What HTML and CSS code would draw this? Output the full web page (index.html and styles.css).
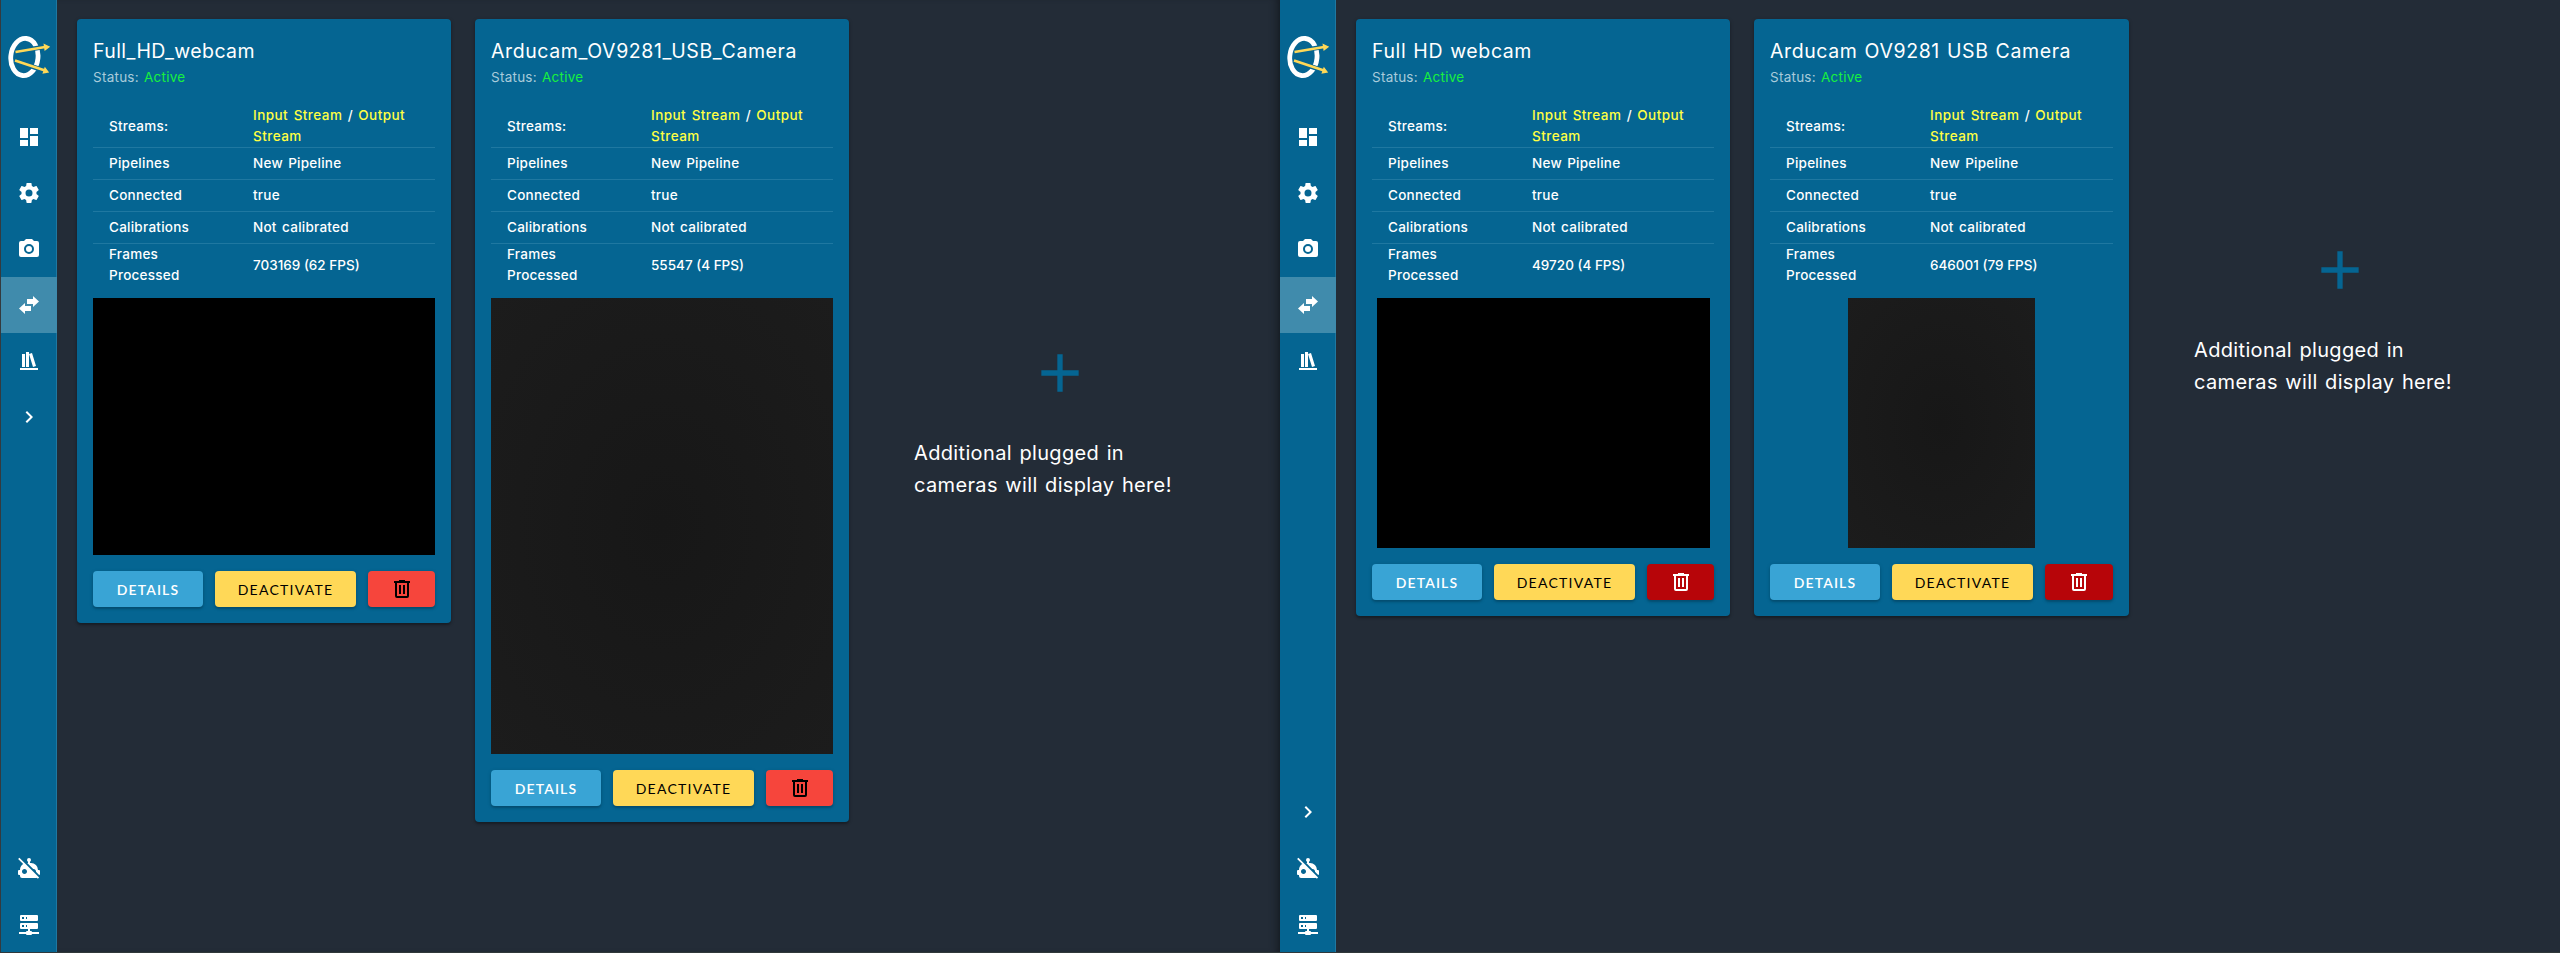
FILE: index.html
```html
<!DOCTYPE html>
<html lang="en">
<head>
	<meta charset="utf-8">
	<title>Camera Matching</title>
	<link rel="stylesheet" href="styles.css">
</head>
<body>
	<svg class="defs" xmlns="http://www.w3.org/2000/svg">
		<symbol id="logo" viewBox="0 0 44 42">
			<ellipse cx="16.4" cy="21" rx="13.6" ry="18.6" transform="rotate(6 16.4 21)" fill="none" stroke="#fff" stroke-width="4.8"/>
			<path d="M14 14.8L38 10.5M14 27L37 35" stroke="#056592" stroke-width="4.6"/>
			<path d="M7.5 16L37 11M7 24.5L37 34.5" stroke="#ffd857" stroke-width="2.6"/>
			<path d="M35.5 7.5L42.2 10.7L36.6 15ZM36.8 30.8L41.2 36.5L34.4 37.8Z" fill="#ffd857"/>
		</symbol>
		<symbol id="dashboard" viewBox="0 0 24 24"><path d="M13,3V9H21V3M13,21H21V11H13M3,21H11V15H3M3,13H11V3H3V13Z"/></symbol>
		<symbol id="cog" viewBox="0 0 24 24"><path d="M12,15.5A3.5,3.5 0 0,1 8.5,12A3.5,3.5 0 0,1 12,8.5A3.5,3.5 0 0,1 15.5,12A3.5,3.5 0 0,1 12,15.5M19.43,12.97C19.47,12.65 19.5,12.33 19.5,12C19.5,11.67 19.47,11.34 19.43,11L21.54,9.37C21.73,9.22 21.78,8.95 21.66,8.73L19.66,5.27C19.54,5.05 19.27,4.96 19.05,5.05L16.56,6.05C16.04,5.66 15.5,5.32 14.87,5.07L14.5,2.42C14.46,2.18 14.25,2 14,2H10C9.75,2 9.54,2.18 9.5,2.42L9.13,5.07C8.5,5.32 7.96,5.66 7.44,6.05L4.95,5.05C4.73,4.96 4.46,5.05 4.34,5.27L2.34,8.73C2.21,8.95 2.27,9.22 2.46,9.37L4.57,11C4.53,11.34 4.5,11.67 4.5,12C4.5,12.33 4.53,12.65 4.57,12.97L2.46,14.63C2.27,14.78 2.21,15.05 2.34,15.27L4.34,18.73C4.46,18.95 4.73,19.03 4.95,18.95L7.44,17.94C7.96,18.34 8.5,18.68 9.13,18.93L9.5,21.58C9.54,21.82 9.75,22 10,22H14C14.25,22 14.46,21.82 14.5,21.58L14.87,18.93C15.5,18.67 16.04,18.34 16.56,17.94L19.05,18.95C19.27,19.03 19.54,18.95 19.66,18.73L21.66,15.27C21.78,15.05 21.73,14.78 21.54,14.63L19.43,12.97Z"/></symbol>
		<symbol id="camera" viewBox="0 0 24 24"><path d="M4,4H7L9,2H15L17,4H20A2,2 0 0,1 22,6V18A2,2 0 0,1 20,20H4A2,2 0 0,1 2,18V6A2,2 0 0,1 4,4M12,7A5,5 0 0,0 7,12A5,5 0 0,0 12,17A5,5 0 0,0 17,12A5,5 0 0,0 12,7M12,9A3,3 0 0,1 15,12A3,3 0 0,1 12,15A3,3 0 0,1 9,12A3,3 0 0,1 12,9Z"/></symbol>
		<symbol id="swap" viewBox="0 0 24 24"><path d="M8,10V13H14V18H8V21L2,15.5L8,10M22,8.5L16,3V6H10V11H16V14L22,8.5Z"/></symbol>
		<symbol id="books" viewBox="0 0 24 24"><path d="M9 3V18H12V3H9M12 5L16 18L19 17L15 4L12 5M5 5V18H8V5H5M3 19V21H21V19H3Z"/></symbol>
		<symbol id="chevron" viewBox="0 0 24 24"><path d="M8.59,16.58L13.17,12L8.59,7.41L10,6L16,12L10,18L8.59,16.58Z"/></symbol>
		<symbol id="robot-off" viewBox="0 0 24 24"><path d="M23,15V18C23,18.5 22.64,18.88 22.17,18.97L18.97,15.77C19,15.68 19,15.59 19,15.5C19,14.12 17.88,13 16.5,13C16.41,13 16.32,13 16.23,13.03L10.2,7H11V5.73C10.4,5.39 10,4.74 10,4A2,2 0 0,1 12,2A2,2 0 0,1 14,4C14,4.74 13.6,5.39 13,5.73V7H14A7,7 0 0,1 21,14H22A1,1 0 0,1 23,15M22.11,21.46L20.84,22.73L19.89,21.78C19.62,21.92 19.32,22 19,22H5A2,2 0 0,1 3,20V19H2A1,1 0 0,1 1,18V15A1,1 0 0,1 2,14H3C3,11.53 4.29,9.36 6.22,8.11L1.11,3L2.39,1.73L22.11,21.46M10,15.5C10,14.12 8.88,13 7.5,13C6.12,13 5,14.12 5,15.5C5,16.88 6.12,18 7.5,18C8.88,18 10,16.88 10,15.5Z"/></symbol>
		<symbol id="server" viewBox="0 0 24 24"><path d="M13,19H14A1,1 0 0,1 15,20H22V22H15A1,1 0 0,1 14,23H10A1,1 0 0,1 9,22H2V20H9A1,1 0 0,1 10,19H11V17H4A1,1 0 0,1 3,16V12A1,1 0 0,1 4,11H20A1,1 0 0,1 21,12V16A1,1 0 0,1 20,17H13V19M4,3H20A1,1 0 0,1 21,4V8A1,1 0 0,1 20,9H4A1,1 0 0,1 3,8V4A1,1 0 0,1 4,3M9,7H10V5H9V7M9,15H10V13H9V15M5,5V7H7V5H5M5,13V15H7V13H5Z"/></symbol>
		<symbol id="trash" viewBox="0 0 24 24"><path d="M9,3V4H4V6H5V19A2,2 0 0,0 7,21H17A2,2 0 0,0 19,19V6H20V4H15V3H9M7,6H17V19H7V6M9,8V17H11V8H9M13,8V17H15V8H13Z"/></symbol>
		<symbol id="plus" viewBox="0 0 24 24"><path d="M19,13H13V19H11V13H5V11H11V5H13V11H19V13Z"/></symbol>
	</svg>

	<div class="app app-left">
		<nav class="sidebar">
			<svg class="logo"><use href="#logo"/></svg>
			<a class="item"><svg class="icon"><use href="#dashboard"/></svg></a>
			<a class="item"><svg class="icon"><use href="#cog"/></svg></a>
			<a class="item"><svg class="icon"><use href="#camera"/></svg></a>
			<a class="item active"><svg class="icon"><use href="#swap"/></svg></a>
			<a class="item"><svg class="icon"><use href="#books"/></svg></a>
			<a class="item"><svg class="icon"><use href="#chevron"/></svg></a>
			<div class="spacer"></div>
			<a class="item"><svg class="icon"><use href="#robot-off"/></svg></a>
			<a class="item"><svg class="icon"><use href="#server"/></svg></a>
		</nav>
		<main class="cards">
			<section class="card">
				<h2>Full_HD_webcam</h2>
				<p class="status">Status: <span class="on">Active</span></p>
				<table>
					<tr><td>Streams:</td><td><a>Input Stream</a> / <a>Output<br>Stream</a></td></tr>
					<tr><td>Pipelines</td><td>New Pipeline</td></tr>
					<tr><td>Connected</td><td>true</td></tr>
					<tr><td>Calibrations</td><td>Not calibrated</td></tr>
					<tr><td>Frames<br>Processed</td><td class="num">703169 (62 FPS)</td></tr>
				</table>
				<div class="stream black wide"></div>
				<div class="actions">
					<button class="btn details">Details</button>
					<button class="btn deactivate">Deactivate</button>
					<button class="btn delete"><svg class="icon"><use href="#trash"/></svg></button>
				</div>
			</section>
			<section class="card">
				<h2>Arducam_OV9281_USB_Camera</h2>
				<p class="status">Status: <span class="on">Active</span></p>
				<table>
					<tr><td>Streams:</td><td><a>Input Stream</a> / <a>Output<br>Stream</a></td></tr>
					<tr><td>Pipelines</td><td>New Pipeline</td></tr>
					<tr><td>Connected</td><td>true</td></tr>
					<tr><td>Calibrations</td><td>Not calibrated</td></tr>
					<tr><td>Frames<br>Processed</td><td class="num">55547 (4 FPS)</td></tr>
				</table>
				<div class="stream gray tall"></div>
				<div class="actions">
					<button class="btn details">Details</button>
					<button class="btn deactivate">Deactivate</button>
					<button class="btn delete"><svg class="icon"><use href="#trash"/></svg></button>
				</div>
			</section>
			<section class="more">
				<svg class="plus"><use href="#plus"/></svg>
				<p>Additional plugged in<br>cameras will display here!</p>
			</section>
		</main>
	</div>

	<div class="app app-right">
		<nav class="sidebar">
			<svg class="logo"><use href="#logo"/></svg>
			<a class="item"><svg class="icon"><use href="#dashboard"/></svg></a>
			<a class="item"><svg class="icon"><use href="#cog"/></svg></a>
			<a class="item"><svg class="icon"><use href="#camera"/></svg></a>
			<a class="item active"><svg class="icon"><use href="#swap"/></svg></a>
			<a class="item"><svg class="icon"><use href="#books"/></svg></a>
			<div class="spacer"></div>
			<a class="item"><svg class="icon"><use href="#chevron"/></svg></a>
			<a class="item"><svg class="icon"><use href="#robot-off"/></svg></a>
			<a class="item"><svg class="icon"><use href="#server"/></svg></a>
		</nav>
		<main class="cards">
			<section class="card">
				<h2>Full HD webcam</h2>
				<p class="status">Status: <span class="on">Active</span></p>
				<table>
					<tr><td>Streams:</td><td><a>Input Stream</a> / <a>Output<br>Stream</a></td></tr>
					<tr><td>Pipelines</td><td>New Pipeline</td></tr>
					<tr><td>Connected</td><td>true</td></tr>
					<tr><td>Calibrations</td><td>Not calibrated</td></tr>
					<tr><td>Frames<br>Processed</td><td class="num">49720 (4 FPS)</td></tr>
				</table>
				<div class="stream black fit"></div>
				<div class="actions">
					<button class="btn details">Details</button>
					<button class="btn deactivate">Deactivate</button>
					<button class="btn delete"><svg class="icon"><use href="#trash"/></svg></button>
				</div>
			</section>
			<section class="card">
				<h2>Arducam OV9281 USB Camera</h2>
				<p class="status">Status: <span class="on">Active</span></p>
				<table>
					<tr><td>Streams:</td><td><a>Input Stream</a> / <a>Output<br>Stream</a></td></tr>
					<tr><td>Pipelines</td><td>New Pipeline</td></tr>
					<tr><td>Connected</td><td>true</td></tr>
					<tr><td>Calibrations</td><td>Not calibrated</td></tr>
					<tr><td>Frames<br>Processed</td><td class="num">646001 (79 FPS)</td></tr>
				</table>
				<div class="stream gray fit narrow"></div>
				<div class="actions">
					<button class="btn details">Details</button>
					<button class="btn deactivate">Deactivate</button>
					<button class="btn delete"><svg class="icon"><use href="#trash"/></svg></button>
				</div>
			</section>
			<section class="more">
				<svg class="plus"><use href="#plus"/></svg>
				<p>Additional plugged in<br>cameras will display here!</p>
			</section>
		</main>
	</div>
</body>
</html>
```
FILE: styles.css
```css
*{
	box-sizing: border-box;
	margin: 0;
	padding: 0;
}
body{
	display: flex;
	height: 953px;
	overflow: hidden;
	background: #232c37;
	border-bottom: 1px solid #30383a;
	color: white;
	font-family: Inter, "Open Sans", sans-serif;
}
.defs{
	display: none;
}
.app{
	display: flex;
	width: 1280px;
}
.app-left{
	border-left: 1px solid #343a3e;
	box-shadow: inset -8px 0 8px -6px #14191f;
}
.sidebar{
	display: flex;
	flex-direction: column;
	flex: none;
	width: 56px;
	padding-top: 36px;
	background: #056592;
	box-shadow: inset -1px 0 #1f78a1;
}
.logo{
	flex: none;
	width: 44px;
	height: 42px;
	margin: 0 0 31px 7px;
}
.item{
	display: flex;
	flex: none;
	align-items: center;
	justify-content: center;
	height: 56px;
}
.item.active{
	background: #408bac;
}
.spacer{
	flex: 1;
}
.icon{
	width: 24px;
	height: 24px;
	fill: currentColor;
}
.cards{
	display: flex;
	gap: 24px;
	align-self: flex-start;
	align-items: flex-start;
	padding: 19px 0 0 20px;
}
.card{
	width: 374px;
	padding: 16px;
	background: #056592;
	border-radius: 4px;
	box-shadow: 0 2px 2px rgba(0,0,0,.22), 0 1px 4px rgba(0,0,0,.2);
}
.app-right .card + .card{
	width: 375px;
}
h2{
	height: 32px;
	font-size: 19.5px;
	font-weight: 400;
	line-height: 32px;
	letter-spacing: .6px;
	word-spacing: 1px;
	white-space: nowrap;
}
.app-left .card:first-child h2{
	letter-spacing: .4px;
}
.status{
	height: 20px;
	font-size: 13.5px;
	line-height: 20px;
	letter-spacing: .25px;
	word-spacing: 1px;
	color: #a9cbdb;
}
.on{
	color: #18f13f;
}
table{
	width: 100%;
	margin: 18px 0 12px;
	border-collapse: separate;
	border-spacing: 0;
	table-layout: fixed;
	font-size: 13.5px;
	font-weight: 500;
	line-height: 21px;
	letter-spacing: .25px;
	word-spacing: 1.5px;
}
td{
	height: 32px;
	padding-left: 16px;
	border-bottom: 1px solid #1f78a1;
}
td:first-child{
	width: 144px;
}
tr:first-child td{
	height: 43px;
}
tr:last-child td{
	height: 42px;
	border-bottom: 0;
}
td a{
	color: #ffff42;
	letter-spacing: .45px;
}
.num{
	letter-spacing: 0;
	word-spacing: 0;
}
.stream{
	margin: 0 auto 16px;
}
.black{
	background: #000;
}
.gray{
	background: radial-gradient(#171717, #1c1c1c);
}
.wide{
	height: 257px;
}
.tall{
	height: 456px;
}
.fit{
	width: 333px;
	height: 250px;
}
.narrow{
	width: 187px;
}
.actions{
	display: flex;
	gap: 12px;
}
.btn{
	display: flex;
	align-items: center;
	justify-content: center;
	height: 36px;
	border: 0;
	border-radius: 4px;
	box-shadow: 0 2px 2px rgba(0,0,0,.16), 0 1px 4px rgba(0,0,0,.14);
	font-family: Lato, sans-serif;
	font-size: 14px;
	letter-spacing: 1.25px;
	text-transform: uppercase;
}
.details{
	width: 110px;
	background: #39a4d5;
	color: white;
	font-weight: 600;
	letter-spacing: 1.1px;
}
.deactivate{
	width: 141px;
	background: #ffd857;
	color: black;
}
.delete{
	flex: 1;
	background: #f6453c;
	color: black;
}
.app-right .delete{
	background: #b70509;
	color: white;
}
.more{
	display: flex;
	flex-direction: column;
	align-items: center;
	align-self: center;
	width: 374px;
}
.plus{
	width: 64px;
	height: 64px;
	margin-bottom: 32px;
	fill: #056592;
}
.more p{
	width: 292px;
	font-size: 20px;
	line-height: 32px;
	letter-spacing: .35px;
	word-spacing: 1.5px;
	white-space: nowrap;
}
```
